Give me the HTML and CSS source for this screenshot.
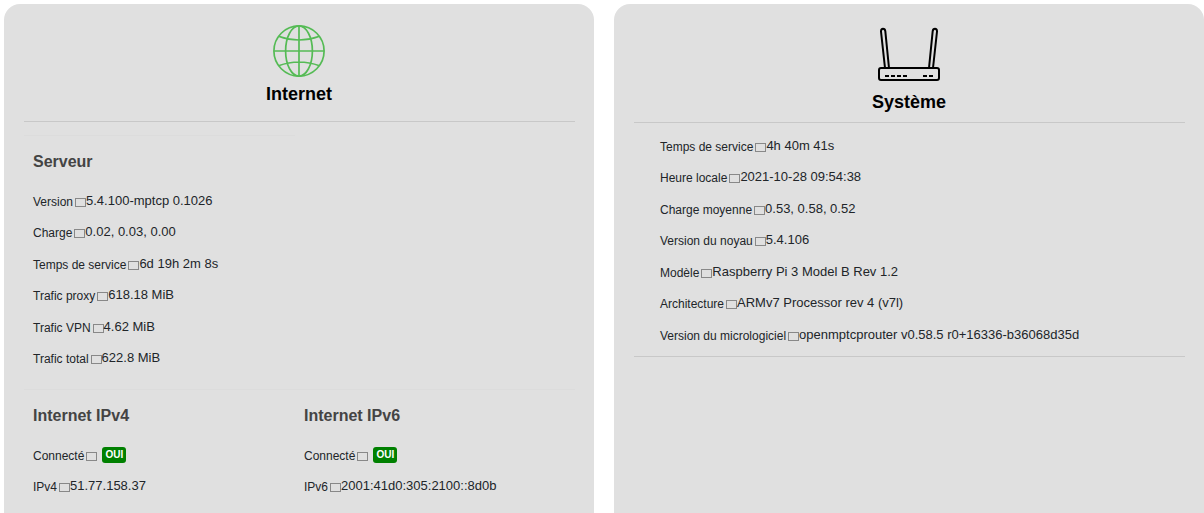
FILE: index.html
```html
<!DOCTYPE html>
<html lang="fr">
<head>
<meta charset="utf-8">
<meta name="viewport" content="width=device-width, initial-scale=1">
<title>État</title>
<link rel="stylesheet" href="styles.css">
</head>
<body>
<main class="status">
  <section class="card">
    <header class="card-header card-header-globe">
      <svg class="globe" viewBox="0 0 52 52" aria-hidden="true">
        <circle cx="26" cy="26" r="25.1"/>
        <ellipse cx="26" cy="26" rx="13.4" ry="25.1"/>
        <path d="M26 1v50M1 26h50M5.500 11.200q20.500 7.600 41 0M5.500 40.800q20.500 -7.600 41 0"/>
      </svg>
      <h2 class="card-title">Internet</h2>
    </header>
    <div class="columns">
      <section class="group group-first">
        <h3 class="group-title">Serveur</h3>
        <dl class="facts">
          <div class="fact"><dt>Version</dt><dd>5.4.100-mptcp 0.1026</dd></div>
          <div class="fact"><dt>Charge</dt><dd>0.02, 0.03, 0.00</dd></div>
          <div class="fact"><dt>Temps de service</dt><dd>6d 19h 2m 8s</dd></div>
          <div class="fact"><dt>Trafic proxy</dt><dd>618.18 MiB</dd></div>
          <div class="fact"><dt>Trafic VPN</dt><dd>4.62 MiB</dd></div>
          <div class="fact"><dt>Trafic total</dt><dd>622.8 MiB</dd></div>
        </dl>
      </section>
    </div>
    <div class="faint-rule"></div>
    <div class="columns">
      <section class="group">
        <h3 class="group-title">Internet IPv4</h3>
        <dl class="facts">
          <div class="fact"><dt>Connecté</dt><dd><span class="badge">OUI</span></dd></div>
          <div class="fact"><dt>IPv4</dt><dd>51.77.158.37</dd></div>
        </dl>
      </section>
      <section class="group">
        <h3 class="group-title">Internet IPv6</h3>
        <dl class="facts">
          <div class="fact"><dt>Connecté</dt><dd><span class="badge">OUI</span></dd></div>
          <div class="fact"><dt>IPv6</dt><dd>2001:41d0:305:2100::8d0b</dd></div>
        </dl>
      </section>
    </div>
  </section>
  <section class="card">
    <header class="card-header card-header-router">
      <svg class="router" viewBox="0 0 62 54" aria-hidden="true">
        <rect x="1" y="41" width="60" height="12" rx="2"/>
        <path d="M7 41L3 4.500q0-2.700 2-2.700t2.300 2.400L11 41M55 41L59 4.500q0-2.700-2-2.700t-2.300 2.400L51 41"/>
        <path d="M7 49h4M13 49h4M19 49h4M25 49h4M45 49h4M51 49h4"/>
      </svg>
      <h2 class="card-title">Système</h2>
    </header>
    <dl class="facts facts-system">
      <div class="fact"><dt>Temps de service</dt><dd>4h 40m 41s</dd></div>
      <div class="fact"><dt>Heure locale</dt><dd>2021-10-28 09:54:38</dd></div>
      <div class="fact"><dt>Charge moyenne</dt><dd>0.53, 0.58, 0.52</dd></div>
      <div class="fact"><dt>Version du noyau</dt><dd>5.4.106</dd></div>
      <div class="fact"><dt>Modèle</dt><dd>Raspberry Pi 3 Model B Rev 1.2</dd></div>
      <div class="fact"><dt>Architecture</dt><dd>ARMv7 Processor rev 4 (v7l)</dd></div>
      <div class="fact"><dt>Version du micrologiciel</dt><dd>openmptcprouter v0.58.5 r0+16336-b36068d35d</dd></div>
    </dl>
  </section>
</main>
</body>
</html>
```
FILE: styles.css
```css
*, *::after { box-sizing: border-box; }
body {
  margin: 0;
  background: #fff;
  color: #212529;
  font-family: "Liberation Sans", Arial, sans-serif;
  font-size: 13px;
}
h2, h3, dl, dd { margin: 0; }
.status {
  display: grid;
  grid-template-columns: 1fr 1fr;
  gap: 20px;
  min-height: 100vh;
  padding: 4px 0 0 4px;
}
.card {
  padding: 0 19px 16px 20px;
  background: #e0e0e0;
  border-radius: 16px 16px 0 0;
}
.card-header {
  display: flex;
  flex-direction: column;
  align-items: center;
  border-bottom: 1px solid #c8c8c8;
}
.card-header-globe { padding: 21px 1px 16px 0; gap: 6px; }
.card-header-router { padding: 23px 1px 9px 0; gap: 10px; }
.card-title {
  color: #000;
  font-size: 18px;
  line-height: 22px;
}
.globe {
  width: 52px;
  height: 52px;
  fill: none;
  stroke: #5b5;
  stroke-width: 1.7;
}
.router {
  width: 62px;
  height: 54px;
  fill: none;
  stroke: #000;
  stroke-width: 2;
}
.columns {
  display: grid;
  grid-template-columns: 1fr 1fr;
  margin-right: 9px;
}
.group { padding: 16px 0 0 9px; }
.group-first {
  margin-top: 13px;
  border-top: 1px solid #dcdcdc;
}
.group-title {
  color: #444;
  font-size: 16px;
  line-height: 20px;
  margin-bottom: 13px;
}
.faint-rule {
  height: 1px;
  margin-top: 15px;
  background: #dcdcdc;
}
.fact {
  display: flex;
  align-items: flex-start;
  height: 31px;
  padding-top: 8px;
  line-height: 15px;
  white-space: nowrap;
}
.fact:nth-child(even) { height: 32px; }
dt {
  display: flex;
  align-items: center;
  gap: 2px;
  padding-top: 2px;
  font-size: 12px;
}
dt::after {
  content: "";
  width: 11px;
  height: 9px;
  border: 1px solid #888;
}
.badge {
  display: block;
  margin-left: 5px;
  padding: 0 3px;
  border-radius: 3px;
  background: #008000;
  color: #fff;
  font-size: 10px;
  font-weight: bold;
  line-height: 16px;
}
.facts-system {
  padding: 7px 0 6px 26px;
  border-bottom: 1px solid #c8c8c8;
}
```
